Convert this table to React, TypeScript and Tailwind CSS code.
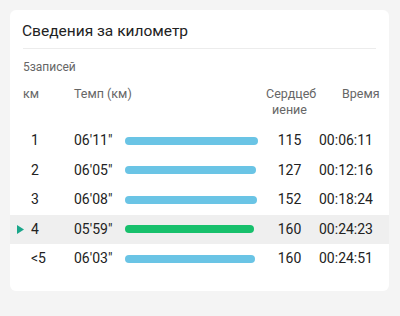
const rows = [
  { km: "1", pace: "06'11\"", bar: 133, hr: "115", time: "00:06:11", active: false },
  { km: "2", pace: "06'05\"", bar: 131, hr: "127", time: "00:12:16", active: false },
  { km: "3", pace: "06'08\"", bar: 132, hr: "152", time: "00:18:24", active: false },
  { km: "4", pace: "05'59\"", bar: 129, hr: "160", time: "00:24:23", active: true },
  { km: "<5", pace: "06'03\"", bar: 130, hr: "160", time: "00:24:51", active: false },
];

const App = () => {
  return (
    <div
      className="w-[400px] h-[316px] bg-[#f4f4f4] p-[10px] pr-[11px]"
      style={{ fontFamily: "Roboto, 'Noto Sans', sans-serif" }}
    >
      <div className="bg-white rounded-md h-[281px]">
        <div className="px-[12px] pt-[11px]">
          <h2 className="text-[15.5px] leading-[20px] text-[#222]">Сведения за километр</h2>
          <div className="mt-[7px] mr-[1px] ml-[1px] border-t border-[#ececec]"></div>
          <p className="mt-[11px] ml-[1px] text-[12px] leading-[14px] text-[#666]">5записей</p>
        </div>

        {/* column headers */}
        <div className="flex mt-[12px] text-[12.5px] leading-[16px] text-[#666]">
          <div className="w-[64px] pl-[13px]">км</div>
          <div className="w-[192px]">Темп (км)</div>
          <div className="w-[47px] text-center">Сердцеб иение</div>
          <div className="pl-[29px]">Время</div>
        </div>

        <div className="mt-[8px] text-[14px] text-[#222]">
          {rows.map((r) => (
            <div
              key={r.km}
              className={`flex items-center h-[29.5px] ${r.active ? "bg-[#efefef]" : ""}`}
            >
              <div className="w-[19px] pl-[7px] flex items-center">
                {r.active && (
                  <svg width="7" height="9" viewBox="0 0 7 9">
                    <path d="M0 0 L7 4.5 L0 9 Z" fill="#1aa68a" />
                  </svg>
                )}
              </div>
              <div className="w-[45px] pl-[2px]">{r.km}</div>
              <div className="w-[51px]">{r.pace}</div>
              <div className="w-[141px]">
                <div
                  className={`h-[8px] rounded-full ${r.active ? "bg-[#17c06c]" : "bg-[#6ac4e5]"}`}
                  style={{ width: r.bar }}
                ></div>
              </div>
              <div className="w-[47px] text-center">{r.hr}</div>
              <div className="pl-[6px]">{r.time}</div>
            </div>
          ))}
        </div>
      </div>
    </div>
  );
};

export default App;
